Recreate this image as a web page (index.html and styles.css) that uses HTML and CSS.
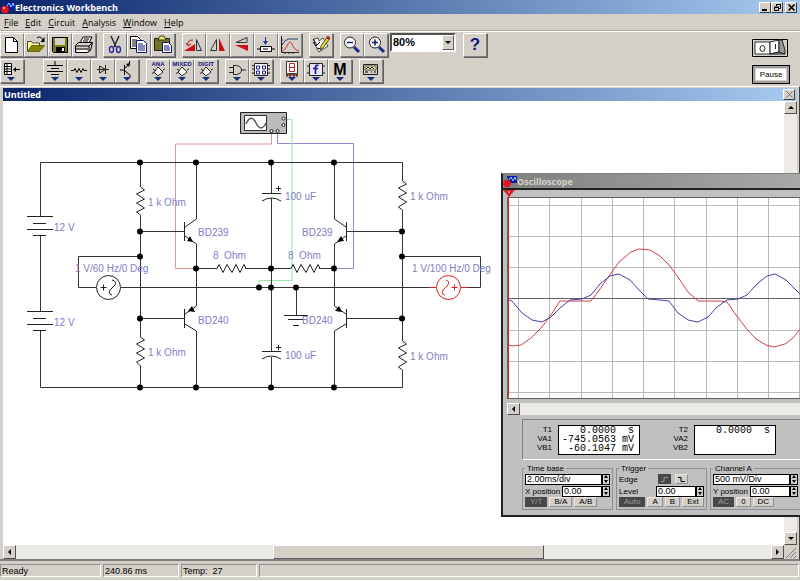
FILE: index.html
```html
<!DOCTYPE html>
<html lang="en">
<head>
    <meta charset="UTF-8">
    <meta name="viewport" content="width=device-width, initial-scale=1.0">
    <title>Electronics Workbench</title>
    <link rel="stylesheet" href="styles.css">
</head>
<body>
    <header class="titlebar">
        <svg class="app-icon" width="14" height="13" viewBox="0 0 14 13"><path d="M4 1h10v7H6z" fill="#0a1c9c"/><path d="M6 5l2-3 2 4 2-4 1 3" fill="none" stroke="#9cf"/><circle cx="4" cy="8.500" r="3.800" fill="#e8141c"/><circle cx="3" cy="7" r="1" fill="#fbb"/></svg>
        <span class="title">Electronics Workbench</span>
        <button class="win-btn" aria-label="Minimize"><svg width="11" height="9"><path d="M2 7h5" stroke="#000" stroke-width="2"/></svg></button>
        <button class="win-btn" aria-label="Restore"><svg width="11" height="9"><path d="M4.500 3V1.500h4v4H7M2.500 4.500h4v3h-4zM4 1.500h5M2 4h5" fill="none" stroke="#000"/></svg></button>
        <button class="win-btn close" aria-label="Close"><svg width="11" height="9"><path d="M2.500 1.500l6 6M8.500 1.500l-6 6" stroke="#000" stroke-width="1.600"/></svg></button>
    </header>

    <nav class="menu">
        <a href="#"><u>F</u>ile</a>
        <a href="#"><u>E</u>dit</a>
        <a href="#"><u>C</u>ircuit</a>
        <a href="#"><u>A</u>nalysis</a>
        <a href="#"><u>W</u>indow</a>
        <a href="#"><u>H</u>elp</a>
    </nav>

    <div class="toolbars">
        <div class="rows">
            <!-- Standard toolbar -->
            <div class="toolbar">
                <div class="group">
                    <button class="tool" aria-label="New"><svg viewBox="0 0 24 24"><path d="M5.500 4.500h8l4 4v11h-12z" fill="#fff" stroke="#000"/><path d="M13.500 4.500v4h4" fill="none" stroke="#000"/></svg></button>
                    <button class="tool" aria-label="Open"><svg viewBox="0 0 24 24"><path d="M3.500 18.500v-10h4l1 1.500h7v3" fill="#ffff9c" stroke="#000" stroke-width=".7"/><path d="M3.500 18.500l4-6h13l-5 6z" fill="#848400" stroke="#4a4a00" stroke-width=".7"/><path d="M13 5q3-3 6 2" fill="none" stroke="#000"/><path d="M20.500 4v5h-4z"/></svg></button>
                    <button class="tool" aria-label="Save"><svg viewBox="0 0 24 24"><path d="M4.500 4.500h15v15h-14l-1-1z" fill="#7c7c10" stroke="#000"/><path d="M7 5h10v7H7z" fill="#d4d0c8"/><path d="M8 14h9v5H8z"/><path d="M14 15h2v3h-2z" fill="#fff"/></svg></button>
                    <button class="tool" aria-label="Print"><svg viewBox="0 0 24 24"><path d="M8 10l3-6h9l-3 6z" fill="#fff" stroke="#000"/><path d="M3.500 12.500l3-3h14l-2 8-3 2h-12z" fill="#d4d0c8" stroke="#000"/><path d="M4 13h13l3-3M4 16h12M12 6h5M11 8h5M17 13v5" fill="none" stroke="#000"/><path d="M5 17h10v2H5z" fill="#fff"/></svg></button>
                </div>
                <div class="group">
                    <button class="tool" aria-label="Cut"><svg viewBox="0 0 24 24"><path d="M8 3l5 11M16 3l-5 11" stroke="#222" stroke-width="1.400"/><ellipse cx="8.500" cy="16.500" rx="2" ry="3" fill="none" stroke="#28289c" stroke-width="1.400"/><ellipse cx="15.500" cy="16.500" rx="2" ry="3" fill="none" stroke="#28289c" stroke-width="1.400"/></svg></button>
                    <button class="tool" aria-label="Copy"><svg viewBox="0 0 24 24"><path d="M3.500 3.500h7l3 3v9h-10z" fill="#fff" stroke="#000"/><path d="M5 7h5M5 9h5M5 11h5M5 13h4" stroke="#000"/><path d="M9.500 7.500h7l3 3v9h-10z" fill="#fff" stroke="#14147c"/><path d="M11 11h5M11 13h7M11 15h7M11 17h7" stroke="#14147c"/></svg></button>
                    <button class="tool" aria-label="Paste"><svg viewBox="0 0 24 24"><path d="M3.500 5.500h15v12h-15z" fill="#74741c" stroke="#222"/><path d="M7 7l2-4h4l2 4z" fill="#e8e46c" stroke="#222" stroke-width=".8"/><path d="M11.500 9.500h6l3 3v7h-9z" fill="#fff" stroke="#14147c"/><path d="M13 13h5M13 15h6M13 17h6" stroke="#14147c"/></svg></button>
                </div>
                <div class="group">
                    <button class="tool" aria-label="Rotate"><svg viewBox="0 0 24 24"><path d="M2 18l11-7v7z" fill="#c81018"/><path d="M14.500 6.500l5 11h-5z" fill="none" stroke="#234"/><path d="M6 12Q5 7 11 7M4 10l2 3 3-2" fill="none" stroke="#c81018"/></svg></button>
                    <button class="tool" aria-label="Flip horizontal"><svg viewBox="0 0 24 24"><path d="M10.500 6.500v11h-6z" fill="none" stroke="#333"/><path d="M13 5l6 13h-6z" fill="#c81018"/></svg></button>
                    <button class="tool" aria-label="Flip vertical"><svg viewBox="0 0 24 24"><path d="M6 9.500l11-5v5z" fill="none" stroke="#333"/><path d="M5 12h13v6z" fill="#c81018"/></svg></button>
                    <button class="tool" aria-label="Create subcircuit"><svg viewBox="0 0 24 24"><path d="M6.500 13.500h11v5h-11zM3 16h3M18 16h3M9 16h5" fill="#fff" stroke="#000"/><path d="M11.500 4v6" stroke="#28389c"/><path d="M9 8h5l-2.500 4z" fill="#28389c"/></svg></button>
                    <button class="tool" aria-label="Display graphs"><svg viewBox="0 0 24 24"><path d="M3.500 3v16.500H21M3 7h2M3 11h2M3 15h2M7 19v2M11 19v2M15 19v2" fill="none" stroke="#222"/><path d="M4 12Q7 6 11 6h9" fill="none" stroke="#246"/><path d="M4 18q3 0 6-7 2-4 4 0 2 6 7 7" fill="none" stroke="#e03040"/></svg></button>
                </div>
                <div class="group">
                    <button class="tool" aria-label="Component properties"><svg viewBox="0 0 24 24"><path d="M5 6l4-1 1 3 4-3 5 8-9 6-4-7z" fill="#fff" stroke="#222" stroke-width=".8"/><path d="M4 9l3 4 4-4M8 15l5 1M4 6l4 6" fill="none" stroke="#111"/><path d="M19 3l2 2-7 10-3 2 1-4z" fill="#f0e020" stroke="#222" stroke-width=".8"/><path d="M18 4l3 1-1 2-3-2z" fill="#c81018"/></svg></button>
                </div>
                <div class="group">
                    <button class="tool" aria-label="Zoom out"><svg viewBox="0 0 24 24"><path d="M14 14l5 5" stroke="#20288c" stroke-width="3"/><circle cx="10" cy="9.500" r="5.500" fill="#fff" stroke="#222"/><path d="M7 9.500h6" stroke="#14147c" stroke-width="1.500"/></svg></button>
                    <button class="tool" aria-label="Zoom in"><svg viewBox="0 0 24 24"><path d="M15 14l5 5" stroke="#20288c" stroke-width="3"/><circle cx="11" cy="9.500" r="5.500" fill="#fff" stroke="#222"/><path d="M8 9.500h6M11 6.500v6" stroke="#14147c" stroke-width="1.500"/></svg></button>
                    <span class="combo">
                        <select aria-label="Zoom level"><option>80%</option><option>100%</option></select>
                        <span class="combo-arrow"><i class="tri down"></i></span>
                    </span>
                </div>
                <button class="tool help" aria-label="Help">?</button>
            </div>

            <!-- Parts bins -->
            <div class="toolbar parts">
                <div class="group">
                    <button class="tool" aria-label="Favorites"><svg viewBox="0 0 24 24"><path d="M4.500 4.500h7v11h-7zM4 7.500h8M4 10h8M4 12.500h8M7 4v12" fill="#fff" stroke="#000"/><path d="M14 10.500h6" stroke="#000"/><path d="M13 10.500l3-2.500v5z"/><path class="drop" d="M7 18h8l-4 4z"/></svg></button>
                </div>
                <div class="group">
                    <button class="tool" aria-label="Sources"><svg viewBox="0 0 24 24"><path d="M12 2v4M4 6.500h16M8 9.500h8M4 12.500h16M8 15.500h8" stroke="#000"/><path class="drop" d="M8 18h8l-4 4z"/></svg></button>
                    <button class="tool" aria-label="Basic"><svg viewBox="0 0 24 24"><path d="M4 11.500h3l1-2 2 4 2-4 2 4 2-4 1 2h3" fill="none" stroke="#000"/><path class="drop" d="M8 18h8l-4 4z"/></svg></button>
                    <button class="tool" aria-label="Diodes"><svg viewBox="0 0 24 24"><path d="M6 10.500h12M8.500 7v7l6-3.500zM14.500 6v9" fill="none" stroke="#222"/><path class="drop" d="M8 18h8l-4 4z"/></svg></button>
                    <button class="tool" aria-label="Transistors"><svg viewBox="0 0 24 24"><path d="M9.500 6v10M5 11h4M10 9l5-4M10 12l5 4M14.500 2v3M15 16v2" fill="none" stroke="#000"/><path d="M11 5l4-1-1 4z"/><path class="drop" d="M8 18h8l-4 4z"/></svg></button>
                </div>
                <div class="group">
                    <button class="tool" aria-label="Analog ICs"><svg viewBox="0 0 24 24"><text x="12" y="7">ANA</text><path d="M12 8l5 5-5 4-4-4zM7 10l3 2M17 11l2-1M6 14h2" fill="#fff" stroke="#222"/><path class="drop" d="M8 18h8l-4 4z"/></svg></button>
                    <button class="tool" aria-label="Mixed ICs"><svg viewBox="0 0 24 24"><text x="12" y="7">MIXED</text><path d="M12 8l5 5-5 4-4-4zM7 10l3 2M17 11l2-1M6 14h2" fill="#fff" stroke="#222"/><path class="drop" d="M8 18h8l-4 4z"/></svg></button>
                    <button class="tool" aria-label="Digital ICs"><svg viewBox="0 0 24 24"><text x="12" y="7">DIGIT</text><path d="M12 8l5 5-5 4-4-4zM7 10l3 2M17 11l2-1M6 14h2" fill="#fff" stroke="#222"/><path class="drop" d="M8 18h8l-4 4z"/></svg></button>
                </div>
                <div class="group">
                    <button class="tool" aria-label="Logic gates"><svg viewBox="0 0 24 24"><path d="M8.500 6.500h3q5 1 5 4.500t-5 4.500h-3zM4 8.500h4M4 13.500h4M17 11h4" fill="none" stroke="#222"/><path class="drop" d="M8 18h8l-4 4z"/></svg></button>
                    <button class="tool" aria-label="Digital"><svg viewBox="0 0 24 24"><path d="M5.500 4.500h13v12h-13zM3 6.500h2M3 10h2M3 14h2M19 6.500h2M19 10h2M19 14h2" fill="#fff" stroke="#222"/><path d="M7.500 7v3h3v-3zM7.500 12v3h3v-3zM13.500 7v3h3v-3zM13.500 12v3h3v-3z" fill="none" stroke="#20208c"/><path class="drop" d="M8 18h8l-4 4z"/></svg></button>
                </div>
                <div class="group">
                    <button class="tool" aria-label="Indicators"><svg viewBox="0 0 24 24"><path d="M6.500 2.500h11v12h-11z" fill="#fff" stroke="#333"/><path d="M9.500 4.500h5v8h-5zM9 8.500h6" fill="none" stroke="#d01c20"/><path d="M6 16h12M7 15v3M10 15v3M14 15v3M17 15v3" stroke="#500"/><path class="drop" d="M8 18h8l-4 4z"/></svg></button>
                    <button class="tool" aria-label="Controls"><svg viewBox="0 0 24 24"><path d="M5.500 4.500h13v12h-13zM3 7h2M3 14h2M19 7h2M19 14h2" fill="#e8e6f4" stroke="#222"/><path d="M14.500 6.500q-3-1-3 2V15M9 9.500h5" fill="none" stroke="#14149c" stroke-width="1.600"/><path class="drop" d="M8 18h8l-4 4z"/></svg></button>
                    <button class="tool" aria-label="Miscellaneous"><svg viewBox="0 0 24 24"><text class="big" x="12" y="16">M</text><path class="drop" d="M8 18h8l-4 4z"/></svg></button>
                </div>
                <div class="group">
                    <button class="tool" aria-label="Instruments"><svg viewBox="0 0 24 24"><path d="M4.500 5.500h14v10h-14z" fill="#d4d0c8" stroke="#222"/><path d="M6 7h11v4H6z" fill="#e8f0a0" stroke="#222" stroke-width=".7"/><path d="M7 10l2-2 2 2 2-2 2 2" fill="none" stroke="#222"/><path d="M6 13h3M12 13h1M15 13h2" stroke="#000"/><path class="drop" d="M8 18h8l-4 4z"/></svg></button>
                </div>
            </div>
        </div>

        <div class="power">
            <button class="switch" aria-label="Activate simulation">
                <svg width="36" height="18"><path d="M.5.500h35v17H.5z" fill="#d4d0c8" stroke="#000"/><path d="M3 3h15v12H3z" fill="#fff" stroke="#333"/><ellipse cx="10.500" cy="9.500" rx="2.500" ry="3" fill="none" stroke="#222"/><path d="M18 3l9-2v12l-9 2z" fill="#fff" stroke="#222"/><path d="M27 1h3l3 10v4H18l9-2z" fill="#999" stroke="#222"/><path d="M27 13l6 2" stroke="#222"/><path d="M23.500 5v5" stroke="#222"/></svg>
            </button>
            <button class="pause">Pause</button>
        </div>
    </div>

    <main class="workspace">
        <section class="circuit-window">
            <div class="child-title">
                <span>Untitled</span>
                <button class="win-btn" aria-label="Close circuit"><svg width="11" height="9"><path d="M2.500 1.500l6 6M8.500 1.500l-6 6" stroke="#777"/></svg></button>
            </div>
            <div class="view">
                <div class="canvas">
                    <svg class="circuit" width="780" height="444" viewBox="3 101 780 444">
                        <!-- Instrument leads -->
                        <path class="lead-a" d="M271.500 133v11h-96v124.500h21"/>
                        <path class="lead-b" d="M277.500 133v10.500h76v125h-19"/>
                        <path class="lead-g" d="M286 119.500h6v161h-33v7"/>

                        <!-- Wires -->
                        <g class="wire">
                            <path d="M40.500 216v-53.500h362V181M40.500 236v75M40.500 331v56.500h362V370"/>
                            <path d="M140.500 162v25M140.500 215v122M140.500 366v21M140 256.500H78.500v31H96M121 287.500h309"/>
                            <path d="M140 231.500h44M140 318.500h44M196.500 162v57M196.500 244v62M196.500 331v56"/>
                            <path d="M271.500 162v31M271.500 198v153.500M271.500 357v30M196 268.500h21M245 268.500h46M319 268.500h15"/>
                            <path d="M334.500 162v57M334.500 244v62M334.500 331v56M347 231.500h55M347 318.500h55"/>
                            <path d="M402.500 210v131M402 256.500h78.500v31H468M296.500 287v28"/>
                        </g>

                        <!-- Batteries, resistors, capacitors, ground -->
                        <g class="part">
                            <path d="M27 216.500h26M33 223.500h13M27 229.500h26M33 235.500h13"/>
                            <path d="M27 311.500h26M33 318.500h13M27 324.500h26M33 330.500h13"/>
                            <path d="M140.500 187l4 3-8 4 8 5-8 4 8 5-8 4 4 3"/>
                            <path d="M140.500 337l4 3-8 4 8 5-8 4 8 5-8 4 4 4"/>
                            <path d="M402.500 181l4 3-8 4 8 5-8 4 8 5-8 5 4 3"/>
                            <path d="M402.500 341l4 3-8 4 8 5-8 4 8 5-8 5 4 3"/>
                            <path d="M217 268.500l2-4 4 8 4-8 5 8 4-8 4 8 4-8 2 4"/>
                            <path d="M291 268.500l2-4 4 8 4-8 5 8 4-8 4 8 4-8 2 4"/>
                            <path d="M262 193.500h19M262 201q9.500-6 19 0M276 188.500h5M278.500 186v5"/>
                            <path d="M262 351.500h19M262 359q9.500-6 19 0M276 347.500h5M278.500 345v5"/>
                            <path d="M284 315.500h24M288 319.500h16M293 325.500h6"/>
                        </g>

                        <!-- Transistors -->
                        <g class="part">
                            <path d="M184.500 222v19M185 227l11.500-8M185 236l11.500 8"/>
                            <path d="M184.500 309v19M185 314l11.500-8M185 324l11.500 7"/>
                            <path d="M346.500 222v19M346 227l-11.500-8M346 236l-11.500 8"/>
                            <path d="M346.500 309v19M346 314l-11.500-8M346 324l-11.500 7"/>
                        </g>
                        <path d="M190 236l3 6-6-1zM192 306l3 6-7-1zM341 236l3 5-7 1zM339 306l3 6-7-1z"/>

                        <!-- Signal sources -->
                        <g class="part">
                            <circle cx="108.500" cy="287.500" r="12"/>
                            <path d="M100.500 287.500h6M103.500 284.500v6M112 280q5 1 3 5l-5 5q-2 4 2 5"/>
                        </g>
                        <g class="part hot">
                            <circle cx="448.500" cy="287.500" r="12"/>
                            <path d="M429 287.500h7M461 287.500h7M451.500 287.500h6M454.500 284.500v6M446 280q4 1 2 5l-5 5q-2 4 2 5"/>
                        </g>

                        <!-- Junctions -->
                        <g>
                            <circle cx="140" cy="162.500" r="3"/><circle cx="196" cy="162.500" r="3"/><circle cx="271" cy="162.500" r="3"/><circle cx="334" cy="162.500" r="3"/>
                            <circle cx="140" cy="231.500" r="3"/><circle cx="140" cy="256.500" r="3"/><circle cx="140" cy="318.500" r="3"/>
                            <circle cx="196" cy="268.500" r="3"/><circle cx="271" cy="268.500" r="3"/><circle cx="334" cy="268.500" r="3"/>
                            <circle cx="259" cy="287.500" r="3"/><circle cx="271" cy="287.500" r="3"/><circle cx="296" cy="287.500" r="3"/>
                            <circle cx="402" cy="231.500" r="3"/><circle cx="402" cy="256.500" r="3"/><circle cx="402" cy="318.500" r="3"/>
                            <circle cx="140" cy="387.500" r="3"/><circle cx="196" cy="387.500" r="3"/><circle cx="271" cy="387.500" r="3"/><circle cx="334" cy="387.500" r="3"/>
                        </g>

                        <!-- Oscilloscope part -->
                        <path d="M240.500 112.500h46v21h-46z" fill="#bbb" stroke="#222"/>
                        <path d="M244.500 115.500h22v15h-22z" fill="#fff" stroke="#333"/>
                        <path d="M246 124q5-11 10-1t10 0" fill="none" stroke="#555" stroke-width="1.500"/>
                        <g class="part port"><circle cx="283.500" cy="118.500" r="1.500"/><circle cx="283.500" cy="125" r="1.500"/><circle cx="271.500" cy="131" r="1.500"/><circle cx="277.500" cy="131" r="1.500"/></g>

                        <g class="label">
                            <text x="148" y="206">1 k Ohm</text>
                            <text x="54" y="231">12 V</text>
                            <text x="198" y="236">BD239</text>
                            <text x="213" y="259">8&#160; Ohm</text>
                            <text x="75" y="272">1 V/60 Hz/0 Deg</text>
                            <text x="54" y="326">12 V</text>
                            <text x="198" y="324">BD240</text>
                            <text x="148" y="356">1 k Ohm</text>
                            <text x="285" y="200">100 uF</text>
                            <text x="302" y="236">BD239</text>
                            <text x="288" y="259">8&#160; Ohm</text>
                            <text x="410" y="200">1 k Ohm</text>
                            <text x="412" y="272">1 V/100 Hz/0 Deg</text>
                            <text x="302" y="324">BD240</text>
                            <text x="285" y="359">100 uF</text>
                            <text x="410" y="360">1 k Ohm</text>
                        </g>
                    </svg>
                </div>
                <div class="scroll-v">
                    <button class="scroll-btn" aria-label="Scroll up"><i class="tri up"></i></button>
                    <button class="scroll-btn" aria-label="Scroll down"><i class="tri down"></i></button>
                </div>
            </div>
            <div class="scroll-h">
                <button class="scroll-btn" aria-label="Scroll left"><i class="tri left"></i></button>
                <div class="track"><div class="thumb"></div></div>
                <button class="scroll-btn" aria-label="Scroll right"><i class="tri right"></i></button>
                <svg class="grip" width="13" height="14"><path d="M2 13L12 3M6 13l6-6M10 13l2-2" stroke="#808080"/></svg>
            </div>
        </section>

        <section class="scope">
            <div class="scope-title">
                <svg class="app-icon" width="14" height="13" viewBox="0 0 14 13"><path d="M4 1h10v7H6z" fill="#0a1c9c"/><path d="M6 5l2-3 2 4 2-4 1 3" fill="none" stroke="#9cf"/><circle cx="4" cy="8.500" r="3.800" fill="#e8141c"/></svg>
                <span>Oscilloscope</span>
            </div>
            <div class="screen">
                <svg width="297" height="209" viewBox="503 190 297 209">
                    <path d="M508 197h292v201.500H508z" fill="#fff"/>
                    <path class="grid" d="M518.500 198v200M549.500 198v200M581.500 198v200M612.500 198v200M643.500 198v200M674.500 198v200M706.500 198v200M737.500 198v200M768.500 198v200M799.500 198v200M508 205.500h292M508 236.500h292M508 267.500h292M508 330.500h292M508 361.500h292M508 392.500h292"/>
                    <path class="axis" d="M508 298.500h292M507.500 398.500v-201h293M507 398.500h293"/>
                    <polyline class="trace-a" points="508,345 513,346 521,345 531,338 541,328 551,315 560,301 591,301 600,289 609,276 619,262 631,252 639,249 650,250 660,256 669,265 678,277 688,292 698,301 720,301 727,302 736,315 746,328 756,339 766,345 774,347 785,344 793,338 800,329"/>
                    <polyline class="trace-b" points="509,300 512,301 522,313 532,320 542,322 551,317 560,308 570,300 582,299 591,295 600,284 610,276 619,274 630,280 640,291 648,299 660,300 669,301 678,313 688,320 698,322 708,317 717,307 727,300 738,299 747,295 757,284 767,276 775,274 786,280 800,294"/>
                    <path d="M508.500 196v202" stroke="#d82828"/>
                    <path d="M503 190h12l-6 7z" fill="#e02020"/>
                    <path d="M509 191v2" stroke="#fff"/>
                </svg>
            </div>
            <div class="scroll-h scope-scroll">
                <button class="scroll-btn" aria-label="Scroll back"><i class="tri left"></i></button>
                <div class="track"></div>
            </div>
            <div class="readouts">
                <div class="names">T1<br>VA1<br>VB1</div>
                <pre class="values">   0.0000  s
-745.0563 mV
 -60.1047 mV</pre>
                <div class="names">T2<br>VA2<br>VB2</div>
                <pre class="values">   0.0000  s</pre>
            </div>
            <div class="settings">
                <fieldset>
                    <legend>Time base</legend>
                    <div class="field">
                        <input type="text" value="2.00ms/div" aria-label="Time base scale">
                        <span class="spin"><button aria-label="Increase"><i class="tri up"></i></button><button aria-label="Decrease"><i class="tri down"></i></button></span>
                    </div>
                    <div class="field">
                        <label for="xpos">X position</label>
                        <input type="text" id="xpos" value="0.00">
                        <span class="spin"><button aria-label="Increase"><i class="tri up"></i></button><button aria-label="Decrease"><i class="tri down"></i></button></span>
                    </div>
                    <div class="modes">
                        <button class="on">Y/T</button>
                        <button>B/A</button>
                        <button>A/B</button>
                    </div>
                </fieldset>
                <fieldset>
                    <legend>Trigger</legend>
                    <div class="field edge">
                        <span class="name">Edge</span>
                        <button class="on" aria-label="Rising edge"><svg width="9" height="7"><path d="M1 5.500h3v-4h4" fill="none" stroke="#999"/></svg></button>
                        <button aria-label="Falling edge"><svg width="9" height="7"><path d="M1 1.500h3v4h4" fill="none" stroke="#000"/></svg></button>
                    </div>
                    <div class="field">
                        <label class="name" for="level">Level</label>
                        <input type="text" id="level" value="0.00">
                        <span class="spin"><button aria-label="Increase"><i class="tri up"></i></button><button aria-label="Decrease"><i class="tri down"></i></button></span>
                    </div>
                    <div class="modes">
                        <button class="on">Auto</button>
                        <button>A</button>
                        <button>B</button>
                        <button>Ext</button>
                    </div>
                </fieldset>
                <fieldset>
                    <legend>Channel A</legend>
                    <div class="field">
                        <input type="text" value="500 mV/Div" aria-label="Channel A scale">
                        <span class="spin"><button aria-label="Increase"><i class="tri up"></i></button><button aria-label="Decrease"><i class="tri down"></i></button></span>
                    </div>
                    <div class="field">
                        <label for="ypos">Y position</label>
                        <input type="text" id="ypos" value="0.00">
                        <span class="spin"><button aria-label="Increase"><i class="tri up"></i></button><button aria-label="Decrease"><i class="tri down"></i></button></span>
                    </div>
                    <div class="modes">
                        <button class="on">AC</button>
                        <button>0</button>
                        <button>DC</button>
                    </div>
                </fieldset>
            </div>
        </section>
    </main>

    <footer class="status">
        <span class="ready">Ready</span>
        <span>240.86 ms</span>
        <span>Temp:&nbsp; 27</span>
        <span class="rest"></span>
    </footer>
</body>
</html>
```
FILE: styles.css
```css
* {
    box-sizing: border-box;
}
body {
    margin: 0;
    height: 100vh;
    display: flex;
    flex-direction: column;
    overflow: hidden;
    background: #d4d0c8;
    color: #000;
    font-family: "Liberation Sans", Arial, sans-serif;
    font-size: 9px;
}
button {
    margin: 0;
    padding: 0;
    border: 0;
    background: #d4d0c8;
    color: #000;
    font: inherit;
    flex: none;
}
svg {
    display: block;
    flex: none;
}

/* Title bar */
.titlebar {
    display: flex;
    align-items: center;
    height: 14px;
    padding: 0 3px 0 1px;
    background: linear-gradient(to right, #0a246a, #a6caf0);
    color: #fff;
    font-family: "Open Sans", sans-serif;
    font-weight: bold;
}
.title {
    flex: 1;
}
.win-btn {
    width: 12px;
    height: 11px;
    border: 1px solid;
    border-color: #fff #404040 #404040 #fff;
}
.win-btn svg {
    width: 10px;
    height: 9px;
}
.win-btn.close {
    margin-left: 2px;
}

/* Menu */
.menu {
    display: flex;
    gap: 7px;
    height: 17px;
    padding: 0 4px;
    align-items: center;
    border-bottom: 1px solid #a8aca4;
    font-family: "Open Sans", sans-serif;
}
.menu a {
    color: #000;
    text-decoration: none;
}

/* Toolbars */
.toolbars {
    display: flex;
    justify-content: space-between;
    height: 55px;
    padding-top: 1px;
    border-top: 1px solid #fff;
}
.rows {
    display: flex;
    flex-direction: column;
    gap: 2px;
}
.toolbar {
    display: flex;
    gap: 7px;
}
.parts .group:first-child {
    margin-right: 12px;
}
.group {
    display: flex;
}
.tool {
    width: 24px;
    height: 24px;
    border: 1px solid;
    border-color: #fff #808080 #808080 #fff;
    box-shadow: 1px 1px 0 #606060;
}
.tool svg {
    width: 24px;
    height: 24px;
    margin: -1px;
}
.tool text {
    fill: #14147c;
    font-size: 6px;
    font-weight: bold;
    text-anchor: middle;
}
.tool text.big {
    fill: #000;
    font-size: 16px;
}
.drop {
    fill: #1c2c7c;
}
.help {
    color: #14147c;
    font-size: 17px;
    font-weight: bold;
}
.combo {
    display: flex;
    position: relative;
    width: 66px;
    height: 19px;
    margin-left: 2px;
    border: 2px solid;
    border-color: #505050 #fff #fff #505050;
    background: #fff;
}
.combo select {
    flex: 1;
    padding: 0 0 2px 1px;
    border: 0;
    background: none;
    appearance: none;
    color: #000;
    font-family: "Liberation Sans", Arial, sans-serif;
    font-size: 11px;
    font-weight: bold;
}
.combo-arrow {
    position: absolute;
    right: 0;
    top: 0;
    bottom: 0;
    width: 12px;
    display: grid;
    place-items: center;
    border: 1px solid;
    border-color: #fff #606060 #606060 #fff;
    background: #d4d0c8;
    pointer-events: none;
}
.power {
    display: flex;
    flex-direction: column;
    gap: 8px;
    padding: 6px 10px 0 0;
}
.pause {
    width: 38px;
    height: 19px;
    border: 1px solid #000;
    background: #fff;
    box-shadow: inset 0 0 0 2px #a0a0a0, inset 0 0 0 3px #d4d0c8;
    font-size: 8px;
}

/* Small arrows */
.tri {
    display: block;
    width: 0;
    height: 0;
    margin: auto;
    border: 3px solid transparent;
}
.tri.up {
    border-top: 0;
    border-bottom-color: #000;
}
.tri.down {
    border-bottom: 0;
    border-top-color: #000;
}
.tri.left {
    border-left: 0;
    border-right-color: #000;
}
.tri.right {
    border-right: 0;
    border-left-color: #000;
}

/* Circuit window */
.workspace {
    position: relative;
    flex: 1;
    min-height: 0;
    display: flex;
}
.circuit-window {
    flex: 1;
    min-width: 0;
    display: flex;
    flex-direction: column;
    padding: 1px 2px 0 3px;
    border-right: 1px solid #404040;
    border-bottom: 2px solid #808080;
    border-top: 1px solid #fff;
}
.child-title {
    display: flex;
    justify-content: space-between;
    align-items: center;
    height: 13px;
    padding: 0 2px 0 1px;
    background: linear-gradient(to right, #0a246a, #a6caf0);
    color: #fff;
    font-family: "Open Sans", sans-serif;
    font-weight: bold;
}
.view {
    flex: 1;
    min-height: 0;
    display: flex;
}
.canvas {
    flex: 1;
    min-width: 0;
    overflow: hidden;
    background: #fff;
}
.scroll-v {
    display: flex;
    flex-direction: column;
    justify-content: space-between;
    width: 13px;
    background: #eceae6;
}
.scroll-h {
    display: flex;
    height: 14px;
    background: #d4d0c8;
}
.scroll-btn {
    width: 13px;
    height: 13px;
    border: 1px solid;
    border-color: #fff #505050 #505050 #fff;
}
.scroll-h .scroll-btn {
    height: 100%;
}
.track {
    flex: 1;
    background: #eceae6;
}
.thumb {
    width: 36%;
    height: 100%;
    margin-left: 34%;
    border: 1px solid;
    border-color: #fff #505050 #606060 #fff;
    background: #d4d0c8;
}

/* Schematic */
.wire,
.part {
    fill: none;
    stroke: #333;
}
.part {
    stroke: #222;
}
.part.hot {
    stroke: #e02020;
}
.part.port {
    fill: #fff;
}
.lead-a,
.lead-b,
.lead-g {
    fill: none;
    stroke: #e09494;
}
.lead-b {
    stroke: #8c8cd0;
}
.lead-g {
    stroke: #98e4a4;
}
.label {
    fill: #8080c4;
    font-size: 10px;
}

/* Oscilloscope */
.scope {
    position: absolute;
    left: 501px;
    right: 0;
    top: 87px;
    display: flex;
    flex-direction: column;
    border: 2px solid #202020;
    border-top: 1px solid #808080;
    border-right: 0;
    background: #c0c0c0;
    font-size: 8px;
}
.scope button {
    background: #d4d0c8;
}
.scope-title {
    display: flex;
    align-items: center;
    height: 16px;
    border-bottom: 2px solid #202020;
    background: linear-gradient(to right, #808080, #a8a8a8);
    color: #d4d0c8;
    font-family: "Open Sans", sans-serif;
    font-size: 9px;
    font-weight: bold;
}
.screen {
    overflow: hidden;
}
.grid,
.axis {
    fill: none;
    stroke: #b8b8b8;
}
.axis {
    stroke: #606060;
}
.trace-a,
.trace-b {
    fill: none;
    stroke: #d04048;
}
.trace-b {
    stroke: #4040b0;
}
.scope-scroll {
    height: 12px;
    margin: 4px 0 4px 4px;
    background: #c0c0c0;
}
.readouts {
    display: flex;
    height: 41px;
    margin-left: 19px;
    padding-top: 5px;
    border: 1px solid;
    border-color: #808080 #fff #fff #808080;
    border-right: 0;
}
.names {
    width: 29px;
    line-height: 9px;
    text-align: right;
}
.values {
    width: 82px;
    height: 30px;
    margin: 0 19px 0 6px;
    padding: 0 1px 0 3px;
    border: 1px solid #000;
    background: #fff;
    font-family: "Liberation Mono", monospace;
    font-size: 10px;
    line-height: 9px;
}
.settings {
    display: flex;
    gap: 3px;
    margin: 4px 0 0 19px;
    padding-bottom: 5px;
}
fieldset {
    flex: none;
    width: 91px;
    min-width: 0;
    margin: 0;
    padding: 0 2px 1px 2px;
    border: 1px solid #909090;
}
legend {
    padding: 0 2px;
    line-height: 9px;
}
.field {
    display: flex;
    align-items: center;
    height: 12px;
}
.field label,
.name {
    flex: 1;
    white-space: nowrap;
}
.field input {
    width: 40px;
    height: 11px;
    padding: 0 1px;
    border: 1px solid #000;
    background: #fff;
    color: #000;
    font-family: "Liberation Sans", Arial, sans-serif;
    font-size: 9px;
}
.field input:first-child {
    flex: 1;
}
.spin {
    width: 8px;
    height: 11px;
    display: flex;
    flex-direction: column;
    border: 1px solid #000;
}
.spin button {
    flex: 1;
    min-height: 0;
}
.spin .tri {
    border-left-width: 2px;
    border-right-width: 2px;
}
.modes {
    display: flex;
    gap: 2px;
    height: 11px;
}
.modes button,
.edge button {
    padding: 0 4px;
    height: 10px;
    border: 1px solid;
    border-color: #e8e8e8 #909090 #909090 #e8e8e8;
    line-height: 8px;
}
.edge {
    gap: 4px;
}
.edge button {
    padding: 0 1px;
}
.edge button:last-child {
    margin-right: 16px;
}
.scope .on {
    background: #484848;
    border-color: #484848;
    color: #999;
}

/* Status bar */
.status {
    display: flex;
    gap: 2px;
    height: 20px;
    padding: 3px 1px 3px 0;
    border-bottom: 1px solid #fff;
}
.status span {
    width: 76px;
    padding-left: 1px;
    border: 1px solid;
    border-color: #909090 #fff #fff #909090;
    line-height: 12px;
}
.status .ready {
    width: 101px;
}
.status .rest {
    flex: 1;
}
```
